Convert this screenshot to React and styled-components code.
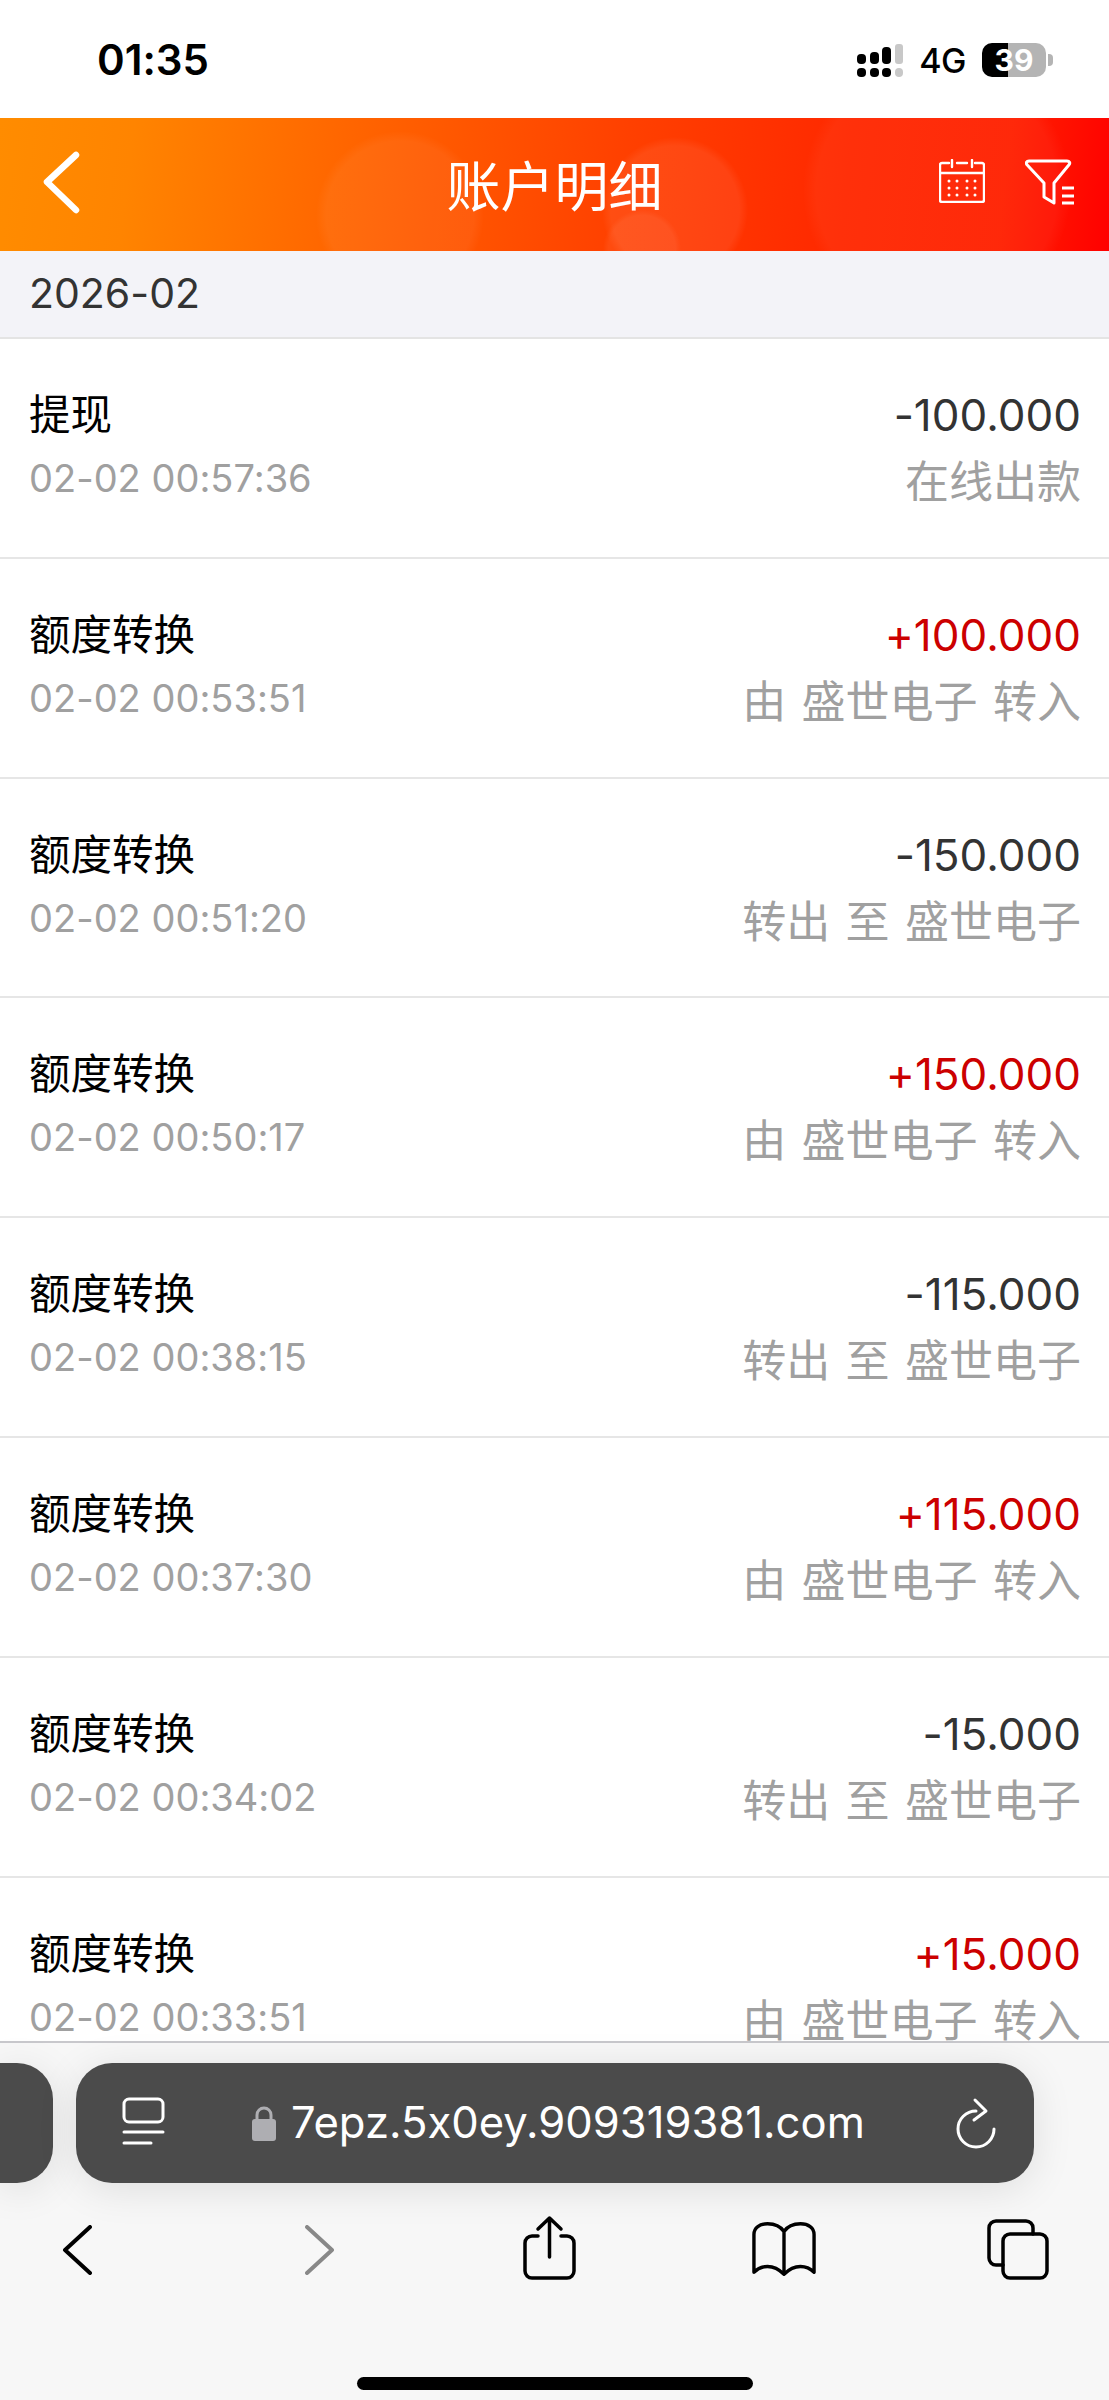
import React from 'react'
import styled, { createGlobalStyle } from 'styled-components'

const Global = createGlobalStyle`
  html, body { margin: 0; padding: 0; background: #fff; }
  * { box-sizing: border-box; }
`

const CJK = `Inter, "Noto Sans CJK SC", sans-serif`

const Page = styled.div`
  width: 1109px;
  height: 2400px;
  display: flex;
  flex-direction: column;
  overflow: hidden;
  background: #fff;
  font-family: ${CJK};
  font-feature-settings: "calt" 0;
`

const StatusBar = styled.div`
  height: 118px;
  flex: none;
  display: flex;
  align-items: flex-start;
  justify-content: space-between;
  padding: 34px 56px 0 97px;
`

const Clock = styled.div`
  font-size: 42px;
  line-height: 52px;
  font-weight: 600;
  color: #000;
`

const StatusIcons = styled.div`
  display: flex;
  align-items: center;
  height: 52px;
`

const Network = styled.span`
  font-size: 34px;
  font-weight: 500;
  color: #000;
  margin: 0 16px 0 16px;
  letter-spacing: -0.5px;
`

const Battery = styled.div`
  width: 64px;
  height: 34px;
  border-radius: 10px;
  overflow: hidden;
  background: linear-gradient(90deg, #000 0, #000 26px, #b4b4b4 26px, #b4b4b4 100%);
  color: #fff;
  font-size: 30px;
  line-height: 34px;
  font-weight: 700;
  text-align: center;
`

const BatteryNub = styled.div`
  width: 5px;
  height: 12px;
  margin-left: 2px;
  border-radius: 0 4px 4px 0;
  background: #b4b4b4;
`

const Header = styled.header`
  height: 133px;
  flex: none;
  position: relative;
  display: flex;
  align-items: center;
  justify-content: center;
  padding-top: 6px;
  color: #fff;
  background:
    radial-gradient(circle 84px at 400px 97px, rgba(255,255,255,.05) 88%, rgba(255,255,255,0) 100%),
    radial-gradient(circle 73px at 675px 92px, rgba(255,255,255,.07) 88%, rgba(255,255,255,0) 100%),
    radial-gradient(circle 39px at 642px 131px, rgba(255,255,255,.06) 86%, rgba(255,255,255,0) 100%),
    radial-gradient(circle 134px at 937px 72px, rgba(255,255,255,.04) 90%, rgba(255,255,255,0) 100%),
    linear-gradient(97deg, #ff8c00 0%, #ff8400 12%, #ff6400 32%, #ff4000 56%, #ff2800 76%, #ff2000 90%, #ff0000 100%);
`

const Title = styled.h1`
  margin: 0;
  font-size: 54px;
  font-weight: 400;
  line-height: 60px;
`

const HeaderBack = styled.svg`
  position: absolute;
  left: 39px;
  top: 30px;
`

const HeaderActions = styled.div`
  position: absolute;
  right: 34px;
  top: 41px;
  display: flex;
  align-items: flex-start;
  gap: 40px;
`

const DateBar = styled.div`
  height: 88px;
  flex: none;
  display: flex;
  align-items: center;
  padding: 0 29px 2px;
  background: #f3f3f8;
  border-bottom: 2px solid #e4e4e4;
  color: #333;
  font-size: 41px;
`

const List = styled.div`
  flex: 1;
  min-height: 0;
  overflow: hidden;
`

const Row = styled.div`
  height: 219.8px;
  display: flex;
  justify-content: space-between;
  padding: 47px 28px 0 29px;
  border-bottom: 2px solid #e6e6e6;
`

const Column = styled.div`
  display: flex;
  flex-direction: column;
  align-items: ${p => (p.$right ? 'flex-end' : 'flex-start')};
  gap: ${p => (p.$right ? 12 : 8)}px;
`

const RowTitle = styled.div`
  font-size: 41.5px;
  line-height: 58px;
  color: #000;
`

const RowTime = styled.div`
  font-size: 38px;
  line-height: 52px;
  color: #a0a0a0;
`

const Amount = styled.div`
  font-size: 44px;
  line-height: 58px;
  color: ${p => (p.$plus ? '#cc0000' : '#333')};
`

const RowNote = styled.div`
  font-size: 44px;
  line-height: 52px;
  color: #a0a0a0;
  word-spacing: 3px;
  white-space: nowrap;
`

const Toolbar = styled.div`
  height: 359px;
  flex: none;
  background: #f7f7f7;
  border-top: 2px solid #c8c8cc;
  padding-top: 20px;
`

const AddressRow = styled.div`
  display: flex;
  gap: 23px;
`

const PrevTab = styled.div`
  width: 53px;
  height: 120px;
  background: #4b4b4b;
  border-radius: 0 36px 36px 0;
  box-shadow: 0 6px 40px rgba(0, 0, 0, .1);
`

const Address = styled.div`
  width: 958px;
  height: 120px;
  display: flex;
  align-items: center;
  padding: 0 38px 0 46px;
  background: #4b4b4b;
  border-radius: 36px;
  box-shadow: 0 6px 40px rgba(0, 0, 0, .1);
`

const UrlWrap = styled.div`
  flex: 1;
  display: flex;
  align-items: center;
  margin-left: 87px;
  gap: 15px;
`

const Url = styled.span`
  color: #fff;
  font-size: 43.6px;
  line-height: 50px;
`

const NavRow = styled.div`
  display: flex;
  align-items: flex-start;
  height: 72px;
  margin-top: 42px;
`

const NavIcon = styled.svg`
  flex: none;
  margin-left: ${p => p.$gap}px;
  margin-top: ${p => p.$top}px;
`

const HomeBar = styled.div`
  width: 396px;
  height: 13px;
  margin: 80px auto 0;
  border-radius: 7px;
  background: #000;
`

const rows = [
  ['提现', '02-02 00:57:36', '-100.000', '在线出款'],
  ['额度转换', '02-02 00:53:51', '+100.000', '由 盛世电子 转入'],
  ['额度转换', '02-02 00:51:20', '-150.000', '转出 至 盛世电子'],
  ['额度转换', '02-02 00:50:17', '+150.000', '由 盛世电子 转入'],
  ['额度转换', '02-02 00:38:15', '-115.000', '转出 至 盛世电子'],
  ['额度转换', '02-02 00:37:30', '+115.000', '由 盛世电子 转入'],
  ['额度转换', '02-02 00:34:02', '-15.000', '转出 至 盛世电子'],
  ['额度转换', '02-02 00:33:51', '+15.000', '由 盛世电子 转入'],
]

const Signal = () => (
  <svg width="46" height="33" viewBox="0 0 46 33">
    <rect x="0" y="10" width="9" height="10" rx="4" fill="#000" />
    <rect x="13" y="8" width="9" height="12" rx="4" fill="#000" />
    <rect x="25" y="3" width="9" height="17" rx="4" fill="#000" />
    <rect x="38" y="0" width="8" height="20" rx="3" fill="#c8c8c8" />
    <rect x="0" y="24" width="9" height="9" rx="4" fill="#000" />
    <rect x="13" y="24" width="9" height="9" rx="4" fill="#000" />
    <rect x="25" y="24" width="9" height="9" rx="4" fill="#000" />
    <rect x="38" y="24" width="8" height="9" rx="4" fill="#c8c8c8" />
  </svg>
)

const Calendar = () => (
  <svg width="46" height="44" viewBox="0 0 46 44" fill="none" stroke="#fff" strokeWidth="2.4" strokeLinecap="round">
    <path d="M10 4H3a2 2 0 0 0-2 2v35a2 2 0 0 0 2 2h40a2 2 0 0 0 2-2V6a2 2 0 0 0-2-2h-7" />
    <path d="M18 4h10M13 1v7M33 1v7M1 14h44" />
    <path d="M10 22h0M18 22h0M28 22h0M36 22h0M10 29h0M18 29h0M28 29h0M36 29h0M10 36h0M18 36h0M28 36h0M36 36h0" strokeWidth="3" />
  </svg>
)

const Filter = () => (
  <svg width="50" height="46" viewBox="0 0 50 46" fill="none" stroke="#fff" strokeWidth="3" strokeLinecap="round" strokeLinejoin="round">
    <path d="M4 2h38c2.500 0 3.500 2 2 3.800L29 24v20l-10-6V24L2 5.800C.6 4 1.500 2 4 2z" />
    <path d="M37 29h12M37 37h12M37 44h12" strokeLinecap="butt" />
  </svg>
)

export default function App() {
  return (
    <Page>
      <Global />
      <StatusBar>
        <Clock>01:35</Clock>
        <StatusIcons>
          <Signal />
          <Network>4G</Network>
          <Battery>39</Battery>
          <BatteryNub />
        </StatusIcons>
      </StatusBar>
      <Header>
        <HeaderBack width="46" height="70" viewBox="0 0 46 70" fill="none" stroke="#fff" strokeWidth="6.500" strokeLinecap="round" strokeLinejoin="round">
          <path d="M37 7 8 34l29 28" />
        </HeaderBack>
        <Title>账户明细</Title>
        <HeaderActions>
          <Calendar />
          <Filter />
        </HeaderActions>
      </Header>
      <DateBar>2026-02</DateBar>
      <List>
        {rows.map(([title, time, amount, note]) => (
          <Row key={time}>
            <Column>
              <RowTitle>{title}</RowTitle>
              <RowTime>{time}</RowTime>
            </Column>
            <Column $right>
              <Amount $plus={amount[0] === '+'}>{amount}</Amount>
              <RowNote>{note}</RowNote>
            </Column>
          </Row>
        ))}
      </List>
      <Toolbar>
        <AddressRow>
          <PrevTab />
          <Address>
            <svg width="43" height="52" viewBox="0 0 43 52" fill="none" stroke="#fff" strokeWidth="3" strokeLinecap="round">
              <rect x="2" y="2" width="39" height="23" rx="5" />
              <path d="M2 35h39M2 46h27" />
            </svg>
            <UrlWrap>
              <svg width="24" height="35" viewBox="0 0 24 35" fill="none">
                <path d="M5 15V9a7 7 0 0 1 14 0v6" stroke="#aeaeb2" strokeWidth="3" />
                <rect x="0" y="13" width="24" height="22" rx="3" fill="#aeaeb2" />
              </svg>
              <Url>7epz.5x0ey.909319381.com</Url>
            </UrlWrap>
            <svg width="40" height="52" viewBox="0 0 40 52" fill="none" stroke="#fff" strokeWidth="3" strokeLinecap="round" strokeLinejoin="round">
              <path d="M20 14A18 18 0 1 0 38 32" />
              <path d="M19 3l11 11-12 9" />
            </svg>
          </Address>
        </AddressRow>
        <NavRow>
          <NavIcon $gap={62} $top={0} width="30" height="50" viewBox="0 0 30 50" fill="none" stroke="#000" strokeWidth="4" strokeLinecap="round" strokeLinejoin="round">
            <path d="M28 2 3 25l25 23" />
          </NavIcon>
          <NavIcon $gap={213} $top={0} width="30" height="50" viewBox="0 0 30 50" fill="none" stroke="#888" strokeWidth="4" strokeLinecap="round" strokeLinejoin="round">
            <path d="M2 2l25 23L2 48" />
          </NavIcon>
          <NavIcon $gap={188} $top={-10} width="53" height="66" viewBox="0 0 53 66" fill="none" stroke="#000" strokeWidth="3.500" strokeLinecap="round" strokeLinejoin="round">
            <path d="M15 21H9a7 7 0 0 0-7 7v28a7 7 0 0 0 7 7h35a7 7 0 0 0 7-7V28a7 7 0 0 0-7-7h-6" />
            <path d="M26.500 42V3M15 14 26.500 3 38 14" />
          </NavIcon>
          <NavIcon $gap={176} $top={-4} width="64" height="56" viewBox="0 0 66 56" fill="none" stroke="#000" strokeWidth="3.500" strokeLinecap="round" strokeLinejoin="round">
            <path d="M33 10v43M33 10C29 4 23 2 16 2 8 2 2 6 2 13v39c4-4 8-6 14-6 7 0 12 3 17 8 5-5 10-8 17-8 6 0 10 2 14 6V13c0-7-6-11-14-11-7 0-13 2-17 8z" />
          </NavIcon>
          <NavIcon $gap={171} $top={-6} width="63" height="62" viewBox="0 0 63 62" fill="none" stroke="#000" strokeWidth="3.500" strokeLinecap="round" strokeLinejoin="round">
            <path d="M16 46H9a7 7 0 0 1-7-7V9a7 7 0 0 1 7-7h30a7 7 0 0 1 7 7v6" />
            <rect x="16" y="15" width="44" height="44" rx="7" />
          </NavIcon>
        </NavRow>
        <HomeBar />
      </Toolbar>
    </Page>
  )
}
